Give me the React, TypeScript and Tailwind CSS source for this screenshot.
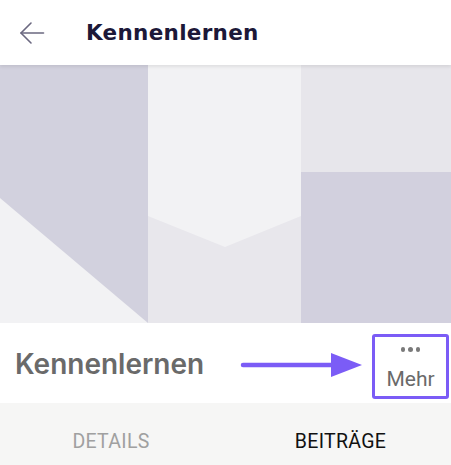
export default function App() {
  return (
    <div className="w-[451px] h-[465px] bg-white overflow-hidden" style={{ fontFamily: "Inter, 'Noto Sans', sans-serif" }}>
      {/* Header */}
      <div className="h-[65px] flex items-center relative z-10 shadow-[0_2px_3px_rgba(0,0,0,0.08)] bg-white">
        <svg width="26" height="24" viewBox="0 0 26 24" className="ml-[19px] block">
          <line x1="2" y1="12" x2="24.5" y2="12" stroke="#6b6880" strokeWidth="1.6" strokeLinecap="round" />
          <polyline points="12,2 2,12 12,22" fill="none" stroke="#6b6880" strokeWidth="1.6" strokeLinecap="round" strokeLinejoin="round" />
        </svg>
        <h1
          className="ml-[41px] text-[21.5px] leading-none font-bold text-[#1c1838] tracking-[0.3px]"
          style={{ fontFamily: "'DejaVu Sans', sans-serif" }}
        >
          Kennenlernen
        </h1>
      </div>

      {/* Cover placeholder */}
      <div className="h-[258px] flex">
        <div className="w-[148px] bg-[#d2d1de]">
          <svg width="148" height="258" viewBox="0 0 148 258" className="block">
            <polygon points="0,133 148,258 0,258" fill="#f2f2f4" />
          </svg>
        </div>
        <div className="w-[153px] bg-[#f2f2f4]">
          <svg width="153" height="258" viewBox="0 0 153 258" className="block">
            <polygon points="0,151 77,182 153,151 153,258 0,258" fill="#e8e7ec" />
          </svg>
        </div>
        <div className="flex-1 flex flex-col">
          <div className="h-[107px] bg-[#e7e6eb]" />
          <div className="flex-1 bg-[#d2d0de]" />
        </div>
      </div>

      {/* Title row */}
      <div className="h-[80px] flex items-start relative">
        <h2 className="ml-[15px] mt-[27px] text-[28px] leading-none font-semibold text-[#6a6a6a]">Kennenlernen</h2>
        <svg width="124" height="24" viewBox="0 0 124 24" className="absolute left-[240px] top-[30px]">
          <line x1="3" y1="12" x2="94" y2="12" stroke="#7b5cf6" strokeWidth="4.5" strokeLinecap="round" />
          <polygon points="91,0 122,12 91,24" fill="#7b5cf6" />
        </svg>
        <div
          className="absolute left-[372px] top-[11px] w-[77px] h-[65px] border-[3px] border-[#7b5cf6] rounded-[3px] flex flex-col items-center"
          style={{ fontFamily: "Roboto, sans-serif" }}
        >
          <div className="mt-[10px] flex gap-[3px]">
            <span className="w-[4.5px] h-[4.5px] rounded-full bg-[#7a7a7a]" />
            <span className="w-[4.5px] h-[4.5px] rounded-full bg-[#7a7a7a]" />
            <span className="w-[4.5px] h-[4.5px] rounded-full bg-[#7a7a7a]" />
          </div>
          <span className="mt-[17px] text-[21px] leading-none text-[#6a6a6a]">Mehr</span>
        </div>
      </div>

      {/* Tabs */}
      <div className="h-[62px] bg-[#f6f6f5] flex items-start pt-[29px]" style={{ fontFamily: "Roboto, sans-serif" }}>
        <div className="w-[222px] text-center text-[19.5px] leading-none text-[#a0a0a0] tracking-[0.3px]">DETAILS</div>
        <div className="flex-1 pl-[8px] text-center text-[19.5px] leading-none text-[#111] tracking-[0.3px]">BEITRÄGE</div>
      </div>
    </div>
  );
}
